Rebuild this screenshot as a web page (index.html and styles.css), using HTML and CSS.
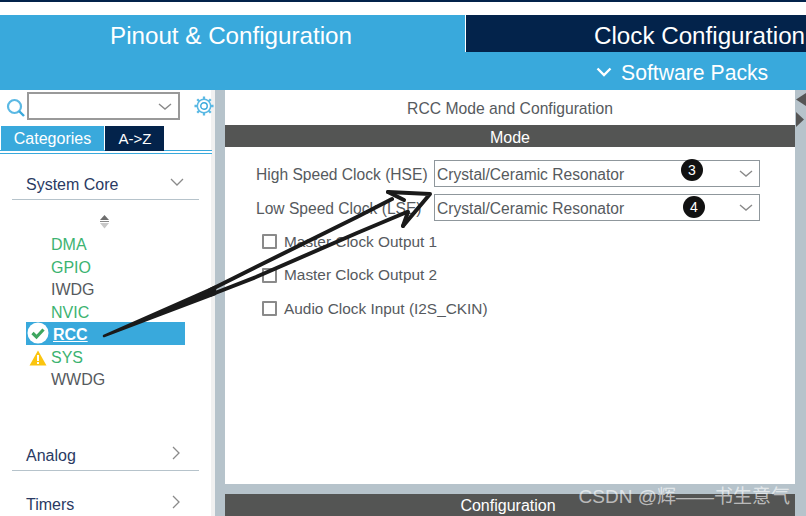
FILE: index.html
```html
<!DOCTYPE html>
<html lang="en">
<head>
    <meta charset="UTF-8">
    <meta name="viewport" content="width=device-width, initial-scale=1.0">
    <title>RCC Mode and Configuration</title>
    <link rel="stylesheet" href="styles.css">
</head>
<body>
    <div class="top-line"></div>

    <!-- Main Tabs -->
    <div class="tab-bar">
        <div class="tab-pinout">Pinout &amp; Configuration</div>
        <div class="tab-clock">Clock Configuration</div>
    </div>
    <div class="sub-bar">
        <svg class="packs-icon" width="16" height="10" viewBox="0 0 16 10"><path d="M1.5 1.5 L8 8 L14.5 1.5" fill="none" stroke="#fff" stroke-width="2.4"/></svg>
        <span>Software Packs</span>
    </div>

    <div class="workspace">
        <!-- Sidebar -->
        <div class="sidebar">
            <div class="search-row">
                <svg class="search-icon" width="19" height="20" viewBox="0 0 19 20"><circle cx="8.5" cy="8.5" r="6.5" fill="none" stroke="#5bb9e4" stroke-width="2.2"/><path d="M13 13 L18 18" stroke="#39a9dc" stroke-width="2.4"/></svg>
                <div class="search-box">
                    <svg width="14" height="7" viewBox="0 0 14 7"><path d="M1 1 L7 6 L13 1" fill="none" stroke="#8a8a8a" stroke-width="1.4"/></svg>
                </div>
                <svg class="gear-icon" width="20" height="20" viewBox="0 0 21 21"><circle cx="10.5" cy="10.5" r="7" fill="none" stroke="#5bb9e4" stroke-width="1.6"/><circle cx="10.5" cy="10.5" r="3.4" fill="none" stroke="#39a9dc" stroke-width="1.5"/><path d="M10.5 0.5 V3.5 M10.5 17.5 V20.5 M0.5 10.5 H3.5 M17.5 10.5 H20.5 M3.4 3.4 L5.6 5.6 M15.4 15.4 L17.6 17.6 M17.6 3.4 L15.4 5.6 M5.6 15.4 L3.4 17.6" stroke="#5bb9e4" stroke-width="2.4"/></svg>
            </div>
            <div class="side-tabs">
                <div class="side-tab active">Categories</div>
                <div class="side-tab">A-&gt;Z</div>
            </div>

            <div class="group-head open">
                <span>System Core</span>
                <svg width="14" height="8" viewBox="0 0 14 8"><path d="M1 1 L7 7 L13 1" fill="none" stroke="#8a8a8a" stroke-width="1.3"/></svg>
            </div>
            <div class="sort-arrows">
                <svg width="11" height="14" viewBox="0 0 11 14"><path d="M5.5 0 L10 5 H1 Z" fill="#6e6e6e"/><path d="M1 6 H10 V7 H1 Z" fill="#888"/><path d="M1 8 H10 L5.5 13.5 Z" fill="#c8c8c8"/></svg>
            </div>
            <ul class="periph-list">
                <li class="ok">DMA</li>
                <li class="ok">GPIO</li>
                <li>IWDG</li>
                <li class="ok">NVIC</li>
                <li class="selected">
                    <svg class="state-icon" width="22" height="22" viewBox="0 0 22 22"><circle cx="11" cy="11" r="10.5" fill="#fff"/><path d="M5.5 11 L9.5 15 L16.5 7.5" fill="none" stroke="#3fa65f" stroke-width="3.2"/></svg>
                    RCC
                </li>
                <li class="ok">
                    <svg class="state-icon warn" width="18" height="16" viewBox="0 0 18 16"><path d="M9 0.5 L17.5 15.5 H0.5 Z" fill="#fbc50f"/><path d="M8 5 H10 V11 H8 Z M8 12 H10 V14 H8 Z" fill="#fff"/></svg>
                    SYS
                </li>
                <li>WWDG</li>
            </ul>

            <div class="group-head closed analog">
                <span>Analog</span>
                <svg width="8" height="14" viewBox="0 0 8 14"><path d="M1 1 L7 7 L1 13" fill="none" stroke="#8a8a8a" stroke-width="1.3"/></svg>
            </div>
            <div class="group-head closed timers">
                <span>Timers</span>
                <svg width="8" height="14" viewBox="0 0 8 14"><path d="M1 1 L7 7 L1 13" fill="none" stroke="#8a8a8a" stroke-width="1.3"/></svg>
            </div>
        </div>

        <!-- Mode Panel -->
        <div class="content">
            <div class="mode-panel">
                <div class="panel-title">RCC Mode and Configuration</div>
                <div class="section-bar">Mode</div>
                <div class="mode-form">
                    <div class="field-row">
                        <label>High Speed Clock (HSE)</label>
                        <div class="select-box">
                            <span>Crystal/Ceramic Resonator</span>
                            <b class="step-badge">3</b>
                            <svg width="14" height="7" viewBox="0 0 14 7"><path d="M1 1 L7 6 L13 1" fill="none" stroke="#8a8a8a" stroke-width="1.4"/></svg>
                        </div>
                    </div>
                    <div class="field-row">
                        <label>Low Speed Clock (LSE)</label>
                        <div class="select-box">
                            <span>Crystal/Ceramic Resonator</span>
                            <b class="step-badge second">4</b>
                            <svg width="14" height="7" viewBox="0 0 14 7"><path d="M1 1 L7 6 L13 1" fill="none" stroke="#8a8a8a" stroke-width="1.4"/></svg>
                        </div>
                    </div>
                    <div class="check-row"><i class="check"></i>Master Clock Output 1</div>
                    <div class="check-row"><i class="check"></i>Master Clock Output 2</div>
                    <div class="check-row"><i class="check"></i>Audio Clock Input (I2S_CKIN)</div>
                </div>
            </div>
            <div class="section-bar config">Configuration</div>
        </div>

        <!-- Right Strip -->
        <div class="right-strip">
            <svg width="11" height="36" viewBox="0 0 11 36"><path d="M11 1 V14 L1 7.5 Z" fill="#555"/><path d="M1 20 L9 27.5 L1 35 Z" fill="#555"/></svg>
        </div>
    </div>

    <!-- Hand-drawn annotation arrow -->
    <svg class="arrow-layer" width="806" height="516" viewBox="0 0 806 516">
        <path d="M104 336 L215 287 V294 Z" fill="#1a1a1a" stroke="#1a1a1a" stroke-width="2.5" stroke-linejoin="round"/>
        <path d="M210 290 L256 267 L357 217 L392 199 M210 295 L256 277 L357 233 L407 212" fill="none" stroke="#1a1a1a" stroke-width="4" stroke-linecap="round" stroke-linejoin="round"/>
        <path d="M388 192 L430 194 L403 226" fill="none" stroke="#1a1a1a" stroke-width="4" stroke-linecap="round" stroke-linejoin="round"/>
        <path d="M388 192 L404 200 M403 226 L408 212" fill="none" stroke="#1a1a1a" stroke-width="4" stroke-linecap="round"/>
    </svg>

    <div class="watermark">CSDN @辉——书生意气</div>
</body>
</html>
```

FILE: styles.css
```css
:root {
    --blue: #39a9dc;
    --navy: #03234b;
    --gutter: #b6c3cb;
    --dark: #545554;
    --text: #565a5e;
    --green: #3cb371;
}

* {
    margin: 0;
    padding: 0;
    box-sizing: border-box;
    font-family: 'Liberation Sans', Arial, sans-serif;
}

body {
    width: 806px;
    height: 516px;
    position: relative;
    overflow: hidden;
    background: #fff;
}

.top-line {
    height: 2px;
    margin-bottom: 13px;
    background: var(--navy);
}

/* Main Tabs */
.tab-bar {
    display: flex;
    height: 37px;
    background: var(--blue);
    color: #fff;
    font-size: 24.2px;
    line-height: 42px;
}

.tab-pinout {
    width: 465px;
    padding-left: 110px;
}

.tab-clock {
    flex: 1;
    padding-left: 128px;
    white-space: nowrap;
    overflow: hidden;
    border-left: 1px solid #fff;
    background: var(--navy);
}

.sub-bar {
    display: flex;
    align-items: center;
    height: 38px;
    padding: 4px 0 0 596px;
    background: var(--blue);
    color: #fff;
    font-size: 21.2px;
}

.packs-icon {
    margin: -2px 9px 0 0;
}

.workspace {
    display: flex;
    height: 426px;
    background: var(--gutter);
}

/* Sidebar */
.sidebar {
    width: 215px;
    height: 426px;
    overflow: hidden;
    background: linear-gradient(90deg, #fff 211px, #f1f1f1 211px);
}

.search-row {
    display: flex;
    align-items: center;
    height: 28px;
    margin-top: 2px;
    padding-left: 6px;
}

.search-icon {
    margin-top: 3px;
}

.search-box {
    display: flex;
    align-items: center;
    justify-content: flex-end;
    width: 153px;
    height: 28px;
    margin-left: 2px;
    padding-right: 6px;
    border: 2px solid #999;
}

.gear-icon {
    margin-left: 14px;
}

.side-tabs {
    display: flex;
    gap: 1px;
    width: 212px;
    height: 28px;
    margin-top: 6px;
    padding: 0 0 3px 1px;
    border-bottom: 1px solid var(--blue);
    box-shadow: inset 0 -2px 0 #fff, inset 0 -3px 0 var(--blue);
}

.side-tab {
    width: 59px;
    height: 25px;
    padding-left: 1px;
    background: var(--navy);
    color: #fff;
    font-size: 15px;
    line-height: 25px;
    text-align: center;
}

.side-tab.active {
    width: 103px;
    padding-left: 0;
    background: var(--blue);
    font-size: 16px;
}

.group-head {
    display: flex;
    align-items: center;
    justify-content: space-between;
    width: 187px;
    height: 31px;
    margin-left: 12px;
    padding: 2px 15px 0 14px;
    border-bottom: 1px solid var(--gutter);
    color: #2a3a63;
    font-size: 16px;
}

.group-head svg {
    margin-bottom: 6px;
}

.group-head.closed {
    padding-right: 19px;
}

.group-head.open {
    margin-top: 15px;
}

.group-head.analog {
    margin-top: 50px;
}

.group-head.timers {
    margin-top: 18px;
    border-bottom: none;
}

.sort-arrows {
    display: flex;
    justify-content: center;
    width: 208px;
    height: 14px;
    margin-top: 15px;
}

.periph-list {
    list-style: none;
    width: 185px;
    margin: 3px 0 0 26px;
}

.periph-list li {
    position: relative;
    height: 22.5px;
    padding-left: 25px;
    color: var(--text);
    font-size: 16px;
    line-height: 26.5px;
}

.periph-list li.ok {
    color: var(--green);
}

.periph-list li.selected {
    width: 159px;
    padding-left: 27px;
    background: var(--blue);
    color: #fff;
    font-weight: bold;
    text-decoration: underline;
}

.state-icon {
    position: absolute;
    left: 1px;
    top: 0;
}

.state-icon.warn {
    left: 3px;
    top: 5px;
}

/* Mode Panel */
.content {
    display: flex;
    flex-direction: column;
    gap: 10px;
    width: 570px;
    margin-left: 10px;
}

.mode-panel {
    height: 394px;
    background: #fff;
}

.panel-title {
    height: 35px;
    color: var(--text);
    font-size: 15.7px;
    line-height: 37px;
    text-align: center;
}

.section-bar {
    height: 22px;
    background: var(--dark);
    color: #fff;
    font-size: 16px;
    line-height: 25px;
    text-align: center;
}

.section-bar.config {
    padding-right: 4px;
    line-height: 23px;
}

.mode-form {
    padding: 13px 35px 0 31px;
}

.field-row {
    display: flex;
    align-items: center;
    justify-content: space-between;
    margin-bottom: 7px;
    color: var(--text);
    font-size: 15.6px;
}

.field-row label,
.select-box span {
    padding-top: 2px;
}

.select-box {
    position: relative;
    display: flex;
    align-items: center;
    justify-content: space-between;
    width: 326px;
    height: 27px;
    padding: 0 6px 0 2px;
    border: 1px solid #8f979c;
}

.step-badge {
    position: absolute;
    left: 246px;
    top: -2px;
    width: 22px;
    height: 22px;
    border-radius: 50%;
    background: #111;
    color: #fff;
    font-size: 14px;
    font-weight: normal;
    line-height: 22px;
    text-align: center;
}

.step-badge.second {
    left: 248px;
    top: 1px;
}

.check-row {
    display: flex;
    align-items: center;
    height: 33.5px;
    padding-left: 6px;
    color: var(--text);
    font-size: 15.4px;
}

.field-row + .check-row {
    margin-top: -3px;
}

.check {
    width: 15px;
    height: 15px;
    margin-right: 7px;
    border: 2px solid #8a8a8a;
    border-radius: 1px;
}

.right-strip {
    flex: 1;
    padding-top: 2px;
}

/* Overlays */
.arrow-layer {
    position: absolute;
    left: 0;
    top: 0;
    pointer-events: none;
}

.watermark {
    position: absolute;
    right: 16px;
    bottom: 8px;
    color: rgba(255, 255, 255, 0.62);
    font-family: 'Liberation Sans', 'Noto Sans CJK SC', sans-serif;
    font-size: 19px;
    white-space: nowrap;
}
```
